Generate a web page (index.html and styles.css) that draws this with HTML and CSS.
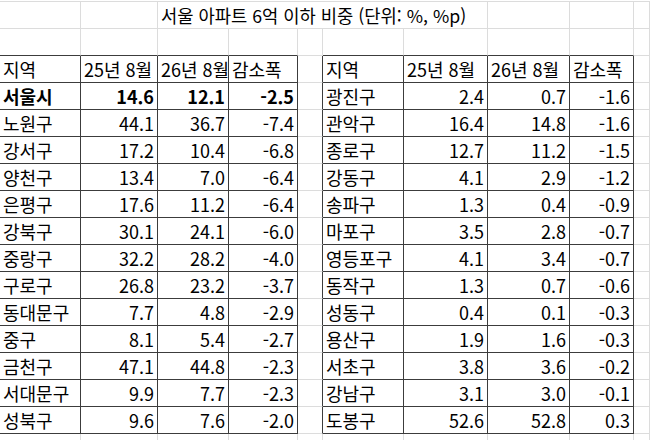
FILE: index.html
```html
<!DOCTYPE html>
<html lang="ko">
<head>
<meta charset="utf-8">
<title>서울 아파트 6억 이하 비중</title>
<link rel="stylesheet" href="styles.css">
</head>
<body>
<div class="sheet">
  <!-- row 1 -->
  <div class="c"></div><div class="c"></div>
  <div class="c title">서울 아파트 6억 이하 비중 (단위: %, %p)</div>
  <div class="c"></div><div class="c"></div><div class="c"></div>
  <!-- row 2 -->
  <div class="c top"></div><div class="c top"></div><div class="c top"></div><div class="c top"></div><div class="c"></div>
  <div class="c top"></div><div class="c top"></div><div class="c top"></div><div class="c top"></div><div class="c"></div>
  <!-- header -->
  <div class="c t">지역</div><div class="c t">25년 8월</div><div class="c t">26년 8월</div><div class="c t">감소폭</div><div class="c lb"></div>
  <div class="c t">지역</div><div class="c t">25년 8월</div><div class="c t">26년 8월</div><div class="c t">감소폭</div><div class="c"></div>

  <div class="c t b">서울시</div><div class="c t n b">14.6</div><div class="c t n b">12.1</div><div class="c t n b">-2.5</div><div class="c lb"></div>
  <div class="c t">광진구</div><div class="c t n">2.4</div><div class="c t n">0.7</div><div class="c t n">-1.6</div><div class="c"></div>

  <div class="c t">노원구</div><div class="c t n">44.1</div><div class="c t n">36.7</div><div class="c t n">-7.4</div><div class="c lb"></div>
  <div class="c t">관악구</div><div class="c t n">16.4</div><div class="c t n">14.8</div><div class="c t n">-1.6</div><div class="c"></div>

  <div class="c t">강서구</div><div class="c t n">17.2</div><div class="c t n">10.4</div><div class="c t n">-6.8</div><div class="c lb"></div>
  <div class="c t">종로구</div><div class="c t n">12.7</div><div class="c t n">11.2</div><div class="c t n">-1.5</div><div class="c"></div>

  <div class="c t">양천구</div><div class="c t n">13.4</div><div class="c t n">7.0</div><div class="c t n">-6.4</div><div class="c lb"></div>
  <div class="c t">강동구</div><div class="c t n">4.1</div><div class="c t n">2.9</div><div class="c t n">-1.2</div><div class="c"></div>

  <div class="c t">은평구</div><div class="c t n">17.6</div><div class="c t n">11.2</div><div class="c t n">-6.4</div><div class="c lb"></div>
  <div class="c t">송파구</div><div class="c t n">1.3</div><div class="c t n">0.4</div><div class="c t n">-0.9</div><div class="c"></div>

  <div class="c t">강북구</div><div class="c t n">30.1</div><div class="c t n">24.1</div><div class="c t n">-6.0</div><div class="c lb"></div>
  <div class="c t">마포구</div><div class="c t n">3.5</div><div class="c t n">2.8</div><div class="c t n">-0.7</div><div class="c"></div>

  <div class="c t">중랑구</div><div class="c t n">32.2</div><div class="c t n">28.2</div><div class="c t n">-4.0</div><div class="c lb"></div>
  <div class="c t">영등포구</div><div class="c t n">4.1</div><div class="c t n">3.4</div><div class="c t n">-0.7</div><div class="c"></div>

  <div class="c t">구로구</div><div class="c t n">26.8</div><div class="c t n">23.2</div><div class="c t n">-3.7</div><div class="c lb"></div>
  <div class="c t">동작구</div><div class="c t n">1.3</div><div class="c t n">0.7</div><div class="c t n">-0.6</div><div class="c"></div>

  <div class="c t">동대문구</div><div class="c t n">7.7</div><div class="c t n">4.8</div><div class="c t n">-2.9</div><div class="c lb"></div>
  <div class="c t">성동구</div><div class="c t n">0.4</div><div class="c t n">0.1</div><div class="c t n">-0.3</div><div class="c"></div>

  <div class="c t">중구</div><div class="c t n">8.1</div><div class="c t n">5.4</div><div class="c t n">-2.7</div><div class="c lb"></div>
  <div class="c t">용산구</div><div class="c t n">1.9</div><div class="c t n">1.6</div><div class="c t n">-0.3</div><div class="c"></div>

  <div class="c t">금천구</div><div class="c t n">47.1</div><div class="c t n">44.8</div><div class="c t n">-2.3</div><div class="c lb"></div>
  <div class="c t">서초구</div><div class="c t n">3.8</div><div class="c t n">3.6</div><div class="c t n">-0.2</div><div class="c"></div>

  <div class="c t">서대문구</div><div class="c t n">9.9</div><div class="c t n">7.7</div><div class="c t n">-2.3</div><div class="c lb"></div>
  <div class="c t">강남구</div><div class="c t n">3.1</div><div class="c t n">3.0</div><div class="c t n">-0.1</div><div class="c"></div>

  <div class="c t">성북구</div><div class="c t n">9.6</div><div class="c t n">7.6</div><div class="c t n">-2.0</div><div class="c lb"></div>
  <div class="c t">도봉구</div><div class="c t n">52.6</div><div class="c t n">52.8</div><div class="c t n">0.3</div><div class="c"></div>

  <!-- row below -->
  <div class="c"></div><div class="c"></div><div class="c"></div><div class="c"></div><div class="c"></div>
  <div class="c"></div><div class="c"></div><div class="c"></div><div class="c"></div><div class="c"></div>
</div>
</body>
</html>
```

FILE: styles.css
```css
html, body {
  margin: 0;
  padding: 0;
  background: #ffffff;
  overflow: hidden;
}

.sheet {
  margin-top: 1px;
  height: 439px;
  overflow: hidden;
  border-top: 1px solid #dcdcdc;
  display: grid;
  grid-template-columns: 81px 77px 71px 69px 25px 81px 84px 82px 64px 1fr;
  grid-auto-rows: 27px;
  font-family: "Noto Sans CJK KR", "Noto Sans", sans-serif;
  font-size: 18px;
  color: #000000;
}

.c {
  box-sizing: border-box;
  border-right: 1px solid #dcdcdc;
  border-bottom: 1px solid #dcdcdc;
  padding: 0 3px;
  line-height: 26px;
  white-space: nowrap;
  overflow: visible;
}

.title {
  grid-column: 3 / 8;
  font-size: 17.7px;
}

.top {
  border-bottom-color: #3c3c3c;
}

.t {
  border-right-color: #3c3c3c;
  border-bottom-color: #3c3c3c;
}

.lb {
  border-right-color: #3c3c3c;
}

.n {
  text-align: right;
}

.b {
  font-weight: 700;
}
```
